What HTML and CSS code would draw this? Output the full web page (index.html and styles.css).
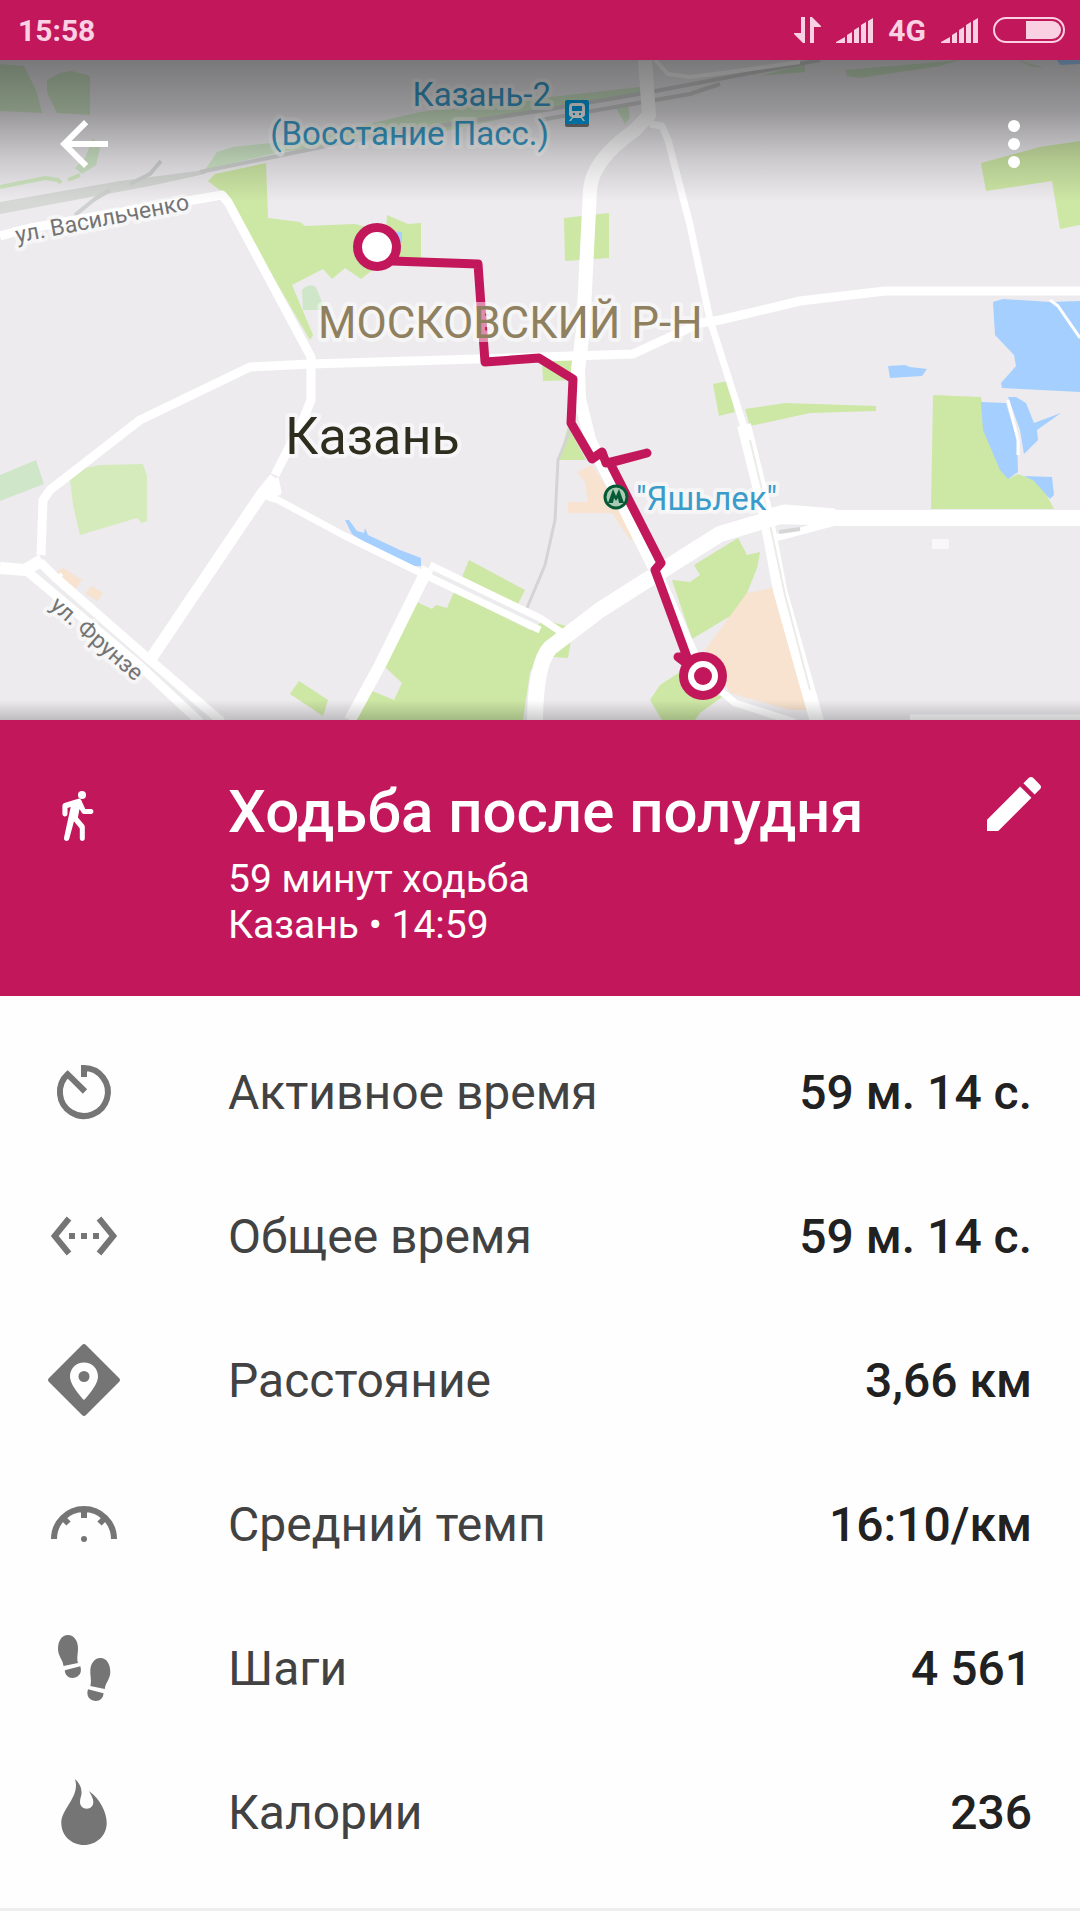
FILE: index.html
```html
<!DOCTYPE html>
<html lang="ru">
<head>
    <meta charset="UTF-8">
    <meta name="viewport" content="width=device-width, initial-scale=1.0">
    <title>Ходьба после полудня</title>
    <link rel="stylesheet" href="styles.css">
</head>
<body>

    <!-- System status bar -->
    <div class="status-bar">
        <span class="clock">15:58</span>
        <svg width="27" height="26" viewBox="0 0 27 26" aria-hidden="true">
            <path d="M7 0h4v26H9L0 17v-1h7zM16 0h2l9 9v1h-7v16h-4z"/>
        </svg>
        <svg width="37" height="26" viewBox="0 0 37 26" aria-hidden="true">
            <path d="M0 26v-1l9-5v6zM11 26v-8l5-3v11zM18 26V13l5-3v16zM25 26V8l5-3v21zM32 26V4l5-3v25z"/>
        </svg>
        <span>4G</span>
        <svg width="37" height="26" viewBox="0 0 37 26" aria-hidden="true">
            <path d="M0 26v-1l9-5v6zM11 26v-8l5-3v11zM18 26V13l5-3v16zM25 26V8l5-3v21zM32 26V4l5-3v25z"/>
        </svg>
        <svg width="72" height="26" viewBox="0 0 72 26" aria-hidden="true">
            <rect class="battery" x="1" y="1" width="70" height="24" rx="12"/>
            <path d="M33 4h26a9 9 0 0 1 0 18H33z"/>
        </svg>
    </div>

    <!-- Map with the walked route -->
    <div class="map">
        <svg class="map-picture" viewBox="0 60 1080 660" preserveAspectRatio="xMidYMid slice">
            <defs>
                <linearGradient id="topShade" x1="0" y1="0" x2="0" y2="1">
                    <stop offset="0" stop-opacity="0.49"/>
                    <stop offset="0.35" stop-opacity="0.37"/>
                    <stop offset="0.7" stop-opacity="0.14"/>
                    <stop offset="1" stop-opacity="0"/>
                </linearGradient>
                <linearGradient id="bottomShade" x1="0" y1="0" x2="0" y2="1">
                    <stop offset="0" stop-opacity="0"/>
                    <stop offset="1" stop-opacity="0.2"/>
                </linearGradient>
            </defs>
            <rect class="land" y="60" width="1080" height="660"/>

            <!-- parks -->
            <g class="park-pale">
                <path d="M0 64L24 66L36 90L42 113L0 111zM47 80L60 73L72 71L90 76V115L57 113L47 92z"/>
                <path d="M205 170L217 152L233 147L300 140L420 112L560 96L640 87V92L540 111L440 132L280 152z"/>
                <path d="M75 168L85 158L93 138L100 148L96 165L82 174zM616 108L628 106L630 118L625 124z"/>
                <path d="M845 70L960 60L940 66L860 78L847 76zM760 76L805 64V72zM1018 60L1045 68L1030 66z"/>
                <path d="M302 290Q308 283 316 287L325 310H303zM0 475L36 460L44 484L0 501z"/>
            </g>
            <path class="park-line" d="M0 187L45 178L58 180L61 183M68 180L80 175"/>
            <g class="park">
                <path d="M208 181L215 174L266 163L268 218L300 222L305 226L355 224L386 232L387 215L408 224L421 223V258L374 269L361 279L345 268L332 279L323 269L292 285L313 335L310 340L268 268L226 195z"/>
                <path d="M564 218L609 213V258L565 261z"/>
                <path d="M981 163L1040 147L1080 141V225L1060 229L1052 181L986 191z"/>
                <path d="M542 360H572V380L543 381zM568 426L586 460H559z"/>
                <path d="M713 384L728 381L735 412L719 416zM745 409L785 403L876 406V411L810 413L750 426z"/>
                <path d="M933 395L981 397L985 430L1008 479L1018 474L1040 483L1054 509H931z"/>
                <path d="M672 580L690 582L700 575L694 565L738 538L747 555L760 552L757 568L747 593L747 606L692 639z"/>
                <path d="M650 700L660 685L680 672L722 697L700 713L695 720H662z"/>
                <path d="M469 560L525 590L518 604L462 577z"/>
                <path d="M417 602L432 609L436 605L447 608L454 592L530 630L545 620L573 628L568 658L540 656L530 672L523 720H355L370 690L394 700L402 683L384 666z"/>
                <path d="M299 681L328 700L323 716L290 694z"/>
            </g>
            <path class="park-soft" d="M70 480L85 468L100 465L143 464L147 476V521L142 523L137 518L80 535L73 505z"/>
            <g class="built">
                <path d="M747 593L778 587L812 710H790L730 693L705 650z"/>
                <path d="M577 472L592 465L640 540H630L612 513H568V502H588L585 482z"/>
                <path d="M63 568L82 580L75 590L57 572zM92 586L103 593L97 601L85 593z"/>
            </g>

            <!-- water -->
            <g class="water">
                <path d="M993 302L1003 299L1050 302L1080 301V392L1002 388L1001 383L1016 366L1014 355L995 335z"/>
                <path d="M888 366L905 365L910 367L927 369L922 376L890 378z"/>
                <path d="M981 402L1006 403L1017 440L1018 472L1008 479L1000 470L983 430z"/>
                <path d="M1008 397L1016 397L1026 403L1034 423L1061 413L1037 430L1038 440L1024 454L1020 430z"/>
                <path d="M1024 476L1052 477L1054 495L1050 499L1034 481zM1057 60H1080V64L1060 65z"/>
                <path d="M345 520L349 520L357 531L364 533L365 528L368 535L400 550L421 558V566H410L370 546L352 534z"/>
                <path d="M390 231L402 232L402 242H392z"/>
            </g>

            <!-- railway -->
            <path class="rail-yard" d="M0 202L120 181L205 170L205 174L150 186L0 214z"/>
            <path class="rail" d="M130 184L150 174L161 161M75 215L95 199L110 190M200 172L380 135L545 110L645 93L820 60M540 120L690 94L720 84"/>
            <path class="rail thin" d="M570 430L558 460L555 520L545 565L527 608"/>

            <!-- roads -->
            <path class="road w4" d="M655 60L668 74L690 77L730 72L800 62"/>
            <path class="road w9" d="M0 236L30 228L222 195L228 202L311 357V400L303 420L275 475"/>
            <path class="road w9" d="M41 555L43 500L50 490L140 420L250 367L311 364L540 357L633 354L700 323L720 320L800 301L885 291H1080"/>
            <path class="road w12" d="M0 568L25 570L42 560M275 478L262 494L150 660M428 568L380 665L350 720"/>
            <path class="road w9" d="M40 562L55 577L150 660L222 722M28 572L140 666L200 722"/>
            <path class="road w7" d="M275 478L278 492L262 495L278 500L345 536L425 575L540 630M430 565L540 618L570 638"/>
            <path class="road w14" d="M645 60L649 115L635 130Q592 160 590 190L583 330L578 370L579 400"/>
            <path class="road w12" d="M578 390L590 440L655 570L695 660"/>
            <path class="road w7" d="M650 124L662 126L668 140L690 225L710 320L745 430M720 690L735 703L795 722"/>
            <path class="road w14" d="M744 425L765 510L780 590L818 725"/>
            <path class="median" d="M750 440L768 515L785 595L810 690"/>
            <path class="road w16" d="M1080 518H840L780 516L720 534L655 575L600 610L550 648Q535 665 535 725"/>
            <path class="road w7" d="M765 513L785 508L835 512M775 538L835 522M1080 718H910"/>
            <path class="median wide" d="M779 532L800 529"/>
            <path class="road" d="M1050 300L1058 306L1080 338M1008 400L1018 440V455"/>
            <path class="road w4" d="M55 580L62 574"/>
            <rect class="square" x="932" y="539" width="17" height="10"/>

            <!-- route -->
            <path class="route" d="M377 257L392 261L478 264L485 362L539 358L573 379L571 423L592 459L602 452L606 463L647 453L610 463L661 563L655 570L687 657L678 657L703 676"/>
            <circle class="route-dot" cx="377" cy="247" r="24"/>
            <circle class="route-hole" cx="377" cy="247" r="15"/>
            <circle class="route-dot" cx="703" cy="676" r="24"/>
            <circle class="route-hole" cx="703" cy="676" r="15"/>
            <circle class="route-dot" cx="703" cy="676" r="9"/>

            <!-- train station -->
            <rect x="565" y="103" width="24" height="24" rx="2" fill="#777"/>
            <rect x="565" y="100" width="24" height="24" rx="2" fill="#00a2e8"/>
            <path d="M573 103h8q4 0 4 4v7q0 3-3 3l3 4h-2l-2-3h-8l-2 3h-2l3-4q-3 0-3-3v-7q0-4 4-4zM572 106v5h10v-5zM573 113v2h2v-2zM579 113v2h2v-2z" fill="#fff" fill-rule="evenodd"/>
            <!-- metro station -->
            <circle cx="616" cy="497" r="11" fill="#aaccb4" stroke="#055a36" stroke-width="3"/>
            <path d="M608 503l5-14l3 7l3-7l5 14h-5l-1-5l-2 3l-2-3l-1 5z" fill="#055a36"/>

            <!-- labels -->
            <g class="label">
                <text class="station" x="551" y="106" text-anchor="end">Казань-2</text>
                <text class="station" x="549" y="145" text-anchor="end">(Восстание Пасс.)</text>
                <text class="station" x="636" y="510">"Яшьлек"</text>
                <text class="district" x="318" y="338">МОСКОВСКИЙ Р-Н</text>
                <text class="city" x="285" y="454">Казань</text>
                <text class="street" transform="translate(17 243) rotate(-11)">ул. Васильченко</text>
                <text class="street" transform="translate(49 607) rotate(41)">ул. Фрунзе</text>
            </g>

            <rect y="60" width="1080" height="142" fill="url(#topShade)"/>
            <rect y="700" width="1080" height="20" fill="url(#bottomShade)"/>
        </svg>

        <div class="toolbar">
            <button type="button" aria-label="Назад">
                <svg viewBox="0 0 24 24"><path d="M20 11H7.83l5.59-5.59L12 4l-8 8 8 8 1.41-1.41L7.83 13H20z"/></svg>
            </button>
            <button type="button" aria-label="Ещё">
                <svg viewBox="0 0 24 24"><circle cx="12" cy="6" r="2"/><circle cx="12" cy="12" r="2"/><circle cx="12" cy="18" r="2"/></svg>
            </button>
        </div>
    </div>

    <!-- Activity title -->
    <header class="summary">
        <svg class="walk" viewBox="0 0 72 72" aria-hidden="true">
            <circle cx="40" cy="15" r="4"/>
            <path d="M37 18.500c2 .5 2.700 2 3.300 4l3 6.500h5.700c3.200 0 3.200 5 0 5h-7.200c-1 0-1.600-.5-2-1.200L37.500 29l-1.600 8.500l6.100 7.200c.6.700.8 1.300.8 2.200V58.500c0 3.300-5 3.300-5 0V48.500l-5.800-7.300L27.200 59c-1 3.300-6 2-5.200-1.200L28.700 27l-3.200 1V34c0 3.200-5.100 3.200-5.100 0v-8c0-1.300.7-2.400 2-2.900z"/>
        </svg>
        <div class="summary-text">
            <h1>Ходьба после полудня</h1>
            <p>59 минут ходьба</p>
            <p>Казань • 14:59</p>
        </div>
        <button type="button" aria-label="Изменить">
            <svg viewBox="0 0 24 24"><path d="M3 17.250V21h3.750L17.810 9.940l-3.750-3.750L3 17.250zM20.710 7.040c.39-.39.39-1.020 0-1.410l-2.340-2.340c-.39-.39-1.020-.39-1.410 0l-1.830 1.830 3.750 3.750 1.830-1.830z"/></svg>
        </button>
    </header>

    <!-- Stats -->
    <dl class="stats">
        <div class="stat">
            <dt>
                <svg viewBox="0 0 72 72"><path class="line" d="M36 21V12A24 24 0 1 1 19.700 18.300L37 35.500"/></svg>
                Активное время
            </dt>
            <dd>59 м. 14 с.</dd>
        </div>
        <div class="stat">
            <dt>
                <svg viewBox="0 0 72 72"><path class="line" d="M21 18.500L6.700 36L21 53.500M51 18.500L65.300 36L51 53.500M21 36h6M33 36h6M45 36h6"/></svg>
                Общее время
            </dt>
            <dd>59 м. 14 с.</dd>
        </div>
        <div class="stat">
            <dt>
                <svg viewBox="0 0 72 72"><path fill-rule="evenodd" d="M34 1q2-2 4 0L71 34q2 2 0 4L38 71q-2 2-4 0L1 38q-2-2 0-4zM36 18.500C28 18.500 22 24.500 22 32.500C22 42 36 56 36 56S50 42 50 32.500C50 24.500 44 18.500 36 18.500z"/><circle cx="36" cy="32.500" r="5.500"/></svg>
                Расстояние
            </dt>
            <dd>3,66 км</dd>
        </div>
        <div class="stat">
            <dt>
                <svg viewBox="0 0 72 72"><path class="line" d="M6 51A30 30 0 0 1 66 51M36 21v9M14.500 29.500l6 6M57.500 29.500l-6 6"/><circle cx="36" cy="51" r="3"/></svg>
                Средний темп
            </dt>
            <dd>16:10/км</dd>
        </div>
        <div class="stat">
            <dt>
                <svg viewBox="0 0 72 72">
                    <path id="foot" d="M20 3C13 3 10 10 10 17C10 24 15 28 15.500 34L30 31C28.500 26 30 22 30 16C30 9 26 3 20 3zM16.800 38.200L32.300 34.300C34 40 32 43.500 28 45.300C22 47.500 17 44 16.800 38.200z"/>
                    <use href="#foot" transform="translate(72.300 23) scale(-1 1)"/>
                </svg>
                Шаги
            </dt>
            <dd>4 561</dd>
        </div>
        <div class="stat">
            <dt>
                <svg viewBox="0 0 72 72"><path d="M27 3C31 7 34 11 33.500 18C33 21 32 23 32 26C32 30 35 32.700 38.700 32.700C42.500 32.700 45.300 30 45.300 26C45.300 22 43 19 41 15C52 23 58.700 36 58.700 47C58.700 59.500 48.500 69 36 69S13.300 59.500 13.300 47C13.300 34 28 24 28 9C28 7 27.500 5 27 3z"/></svg>
                Калории
            </dt>
            <dd>236</dd>
        </div>
    </dl>

</body>
</html>
```
FILE: styles.css
```css
* {
    box-sizing: border-box;
}

body {
    margin: 0;
    background-color: #fefefe;
    font-family: Roboto, "Noto Sans", sans-serif;
    color: #424242;
}

h1, p, dl, dd {
    margin: 0;
}

button {
    display: block;
    padding: 0;
    border: none;
    background: none;
    cursor: pointer;
}

button svg {
    display: block;
    width: 72px;
    height: 72px;
    fill: #fff;
}

/* status bar */
.status-bar {
    display: flex;
    align-items: center;
    gap: 15px;
    height: 60px;
    padding: 0 15px 0 18px;
    background-color: #c2185b;
    color: #fad0e3;
    fill: #fad0e3;
    font-size: 30px;
    font-weight: 700;
}

.clock {
    margin-right: auto;
}

.battery {
    fill: none;
    stroke: #fad0e3;
    stroke-width: 2;
}

/* map */
.map {
    position: relative;
    height: 660px;
}

.map-picture {
    display: block;
    width: 100%;
    height: 100%;
}

/* buttons lie over the map */
.toolbar {
    position: absolute;
    top: 0;
    left: 0;
    right: 0;
    display: flex;
    justify-content: space-between;
    padding: 48px 30px 0 48px;
}

.land { fill: #edebee; }
.park { fill: #cde7a5; }
.park-pale { fill: #cfe6c8; }
.park-soft { fill: #d5ebbb; }
.built { fill: #f7e3cf; }
.water { fill: #a5cfff; }
.square { fill: #f8f8f8; }
.rail-yard { fill: #d6d8d6; }

.park-line {
    fill: none;
    stroke: #cfe6c0;
    stroke-width: 4;
}

.rail {
    fill: none;
    stroke: #cfd1d0;
    stroke-width: 4;
}

.rail.thin {
    stroke: #d3d4d3;
    stroke-width: 3;
}

.road {
    fill: none;
    stroke: #fff;
    stroke-width: 3;
    stroke-linejoin: round;
}

.w4 { stroke-width: 4; }
.w7 { stroke-width: 7; }
.w9 { stroke-width: 9; }
.w12 { stroke-width: 12; }
.w14 { stroke-width: 14; }
.w16 { stroke-width: 16; }

.median {
    fill: none;
    stroke: #ebebe8;
    stroke-width: 2;
}

.median.wide {
    stroke: #d6d6d6;
    stroke-width: 4;
}

.route {
    fill: none;
    stroke: #c2185b;
    stroke-width: 9;
    stroke-linejoin: round;
    stroke-linecap: round;
}

.route-dot { fill: #c2185b; }
.route-hole { fill: #fff; }

.label text {
    paint-order: stroke;
    stroke: rgba(255, 255, 255, 0.5);
    stroke-width: 8;
    stroke-linejoin: round;
}

.label .station {
    fill: #3a9ccb;
    font-size: 33px;
}

.label .district {
    fill: #8f8060;
    font-size: 44px;
}

.label .city {
    fill: #2f2d1e;
    font-size: 52px;
}

.label .street {
    fill: #747474;
    font-size: 23px;
}

/* title block */
.summary {
    display: flex;
    align-items: flex-start;
    padding: 48px 30px 48px 42px;
    background-color: #c2185b;
    color: #fff;
}

.walk {
    flex: none;
    width: 72px;
    height: 72px;
    margin: 12px 114px 0 0;
    fill: #fff;
}

.summary-text {
    flex: 1;
    padding-top: 9px;
}

.summary h1 {
    margin-bottom: 9px;
    font-size: 60px;
    font-weight: 500;
    line-height: 70px;
}

.summary p {
    font-size: 39px;
    line-height: 46px;
}

/* stats list */
.stats {
    padding: 24px 48px;
    border-bottom: 3px solid #eee;
}

.stat {
    display: flex;
    align-items: center;
    justify-content: space-between;
    height: 144px;
    font-size: 48px;
}

.stat dt {
    display: flex;
    align-items: center;
    gap: 108px;
}

.stat dt svg {
    width: 72px;
    height: 72px;
    fill: #757575;
}

.stat .line {
    fill: none;
    stroke: #757575;
    stroke-width: 6;
}

.stat dd {
    color: #212121;
    font-weight: 500;
}
```
